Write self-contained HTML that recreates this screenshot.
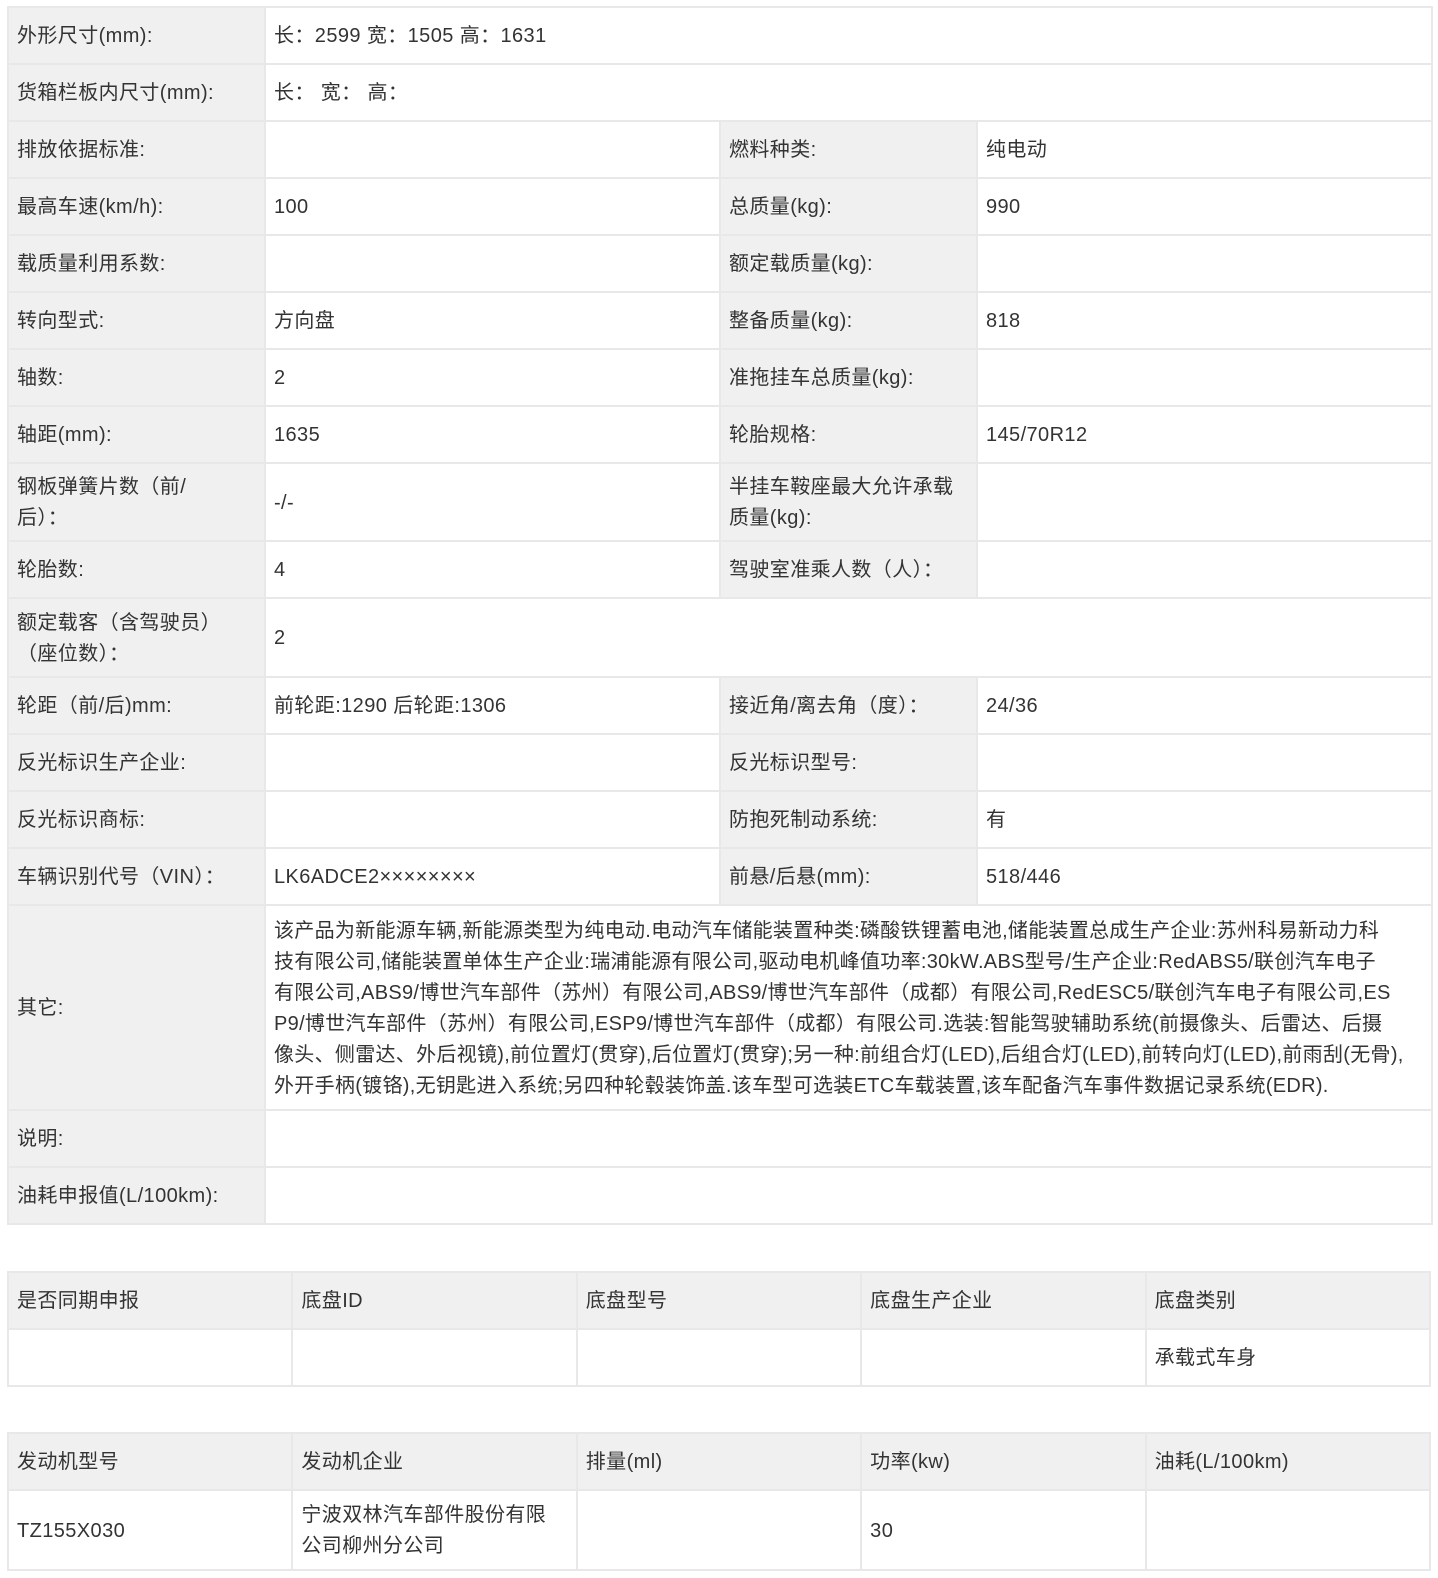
<!DOCTYPE html>
<html><head><meta charset="utf-8"><style>
body{margin:0;background:#fff;font-family:"Liberation Sans","Noto Sans CJK SC",sans-serif;font-size:20px;color:#333;}
table{position:absolute;left:7px;width:1424px;border-collapse:collapse;table-layout:fixed;}
td{border:2px solid #e8e8e8;padding:2px 8px 0 8px;line-height:31px;vertical-align:middle;letter-spacing:0.4px;}
td.l{background:#f0f0f0;}
tr.h td{background:#f0f0f0;}
</style></head><body>
<table style="top:6px">
<colgroup><col style="width:257px"><col style="width:455px"><col style="width:257px"><col style="width:455px"></colgroup>
<tr style="height:57px"><td class="l">外形尺寸(mm):</td><td colspan="3">长：2599 宽：1505 高：1631</td></tr>
<tr style="height:57px"><td class="l">货箱栏板内尺寸(mm):</td><td colspan="3">长： 宽： 高：</td></tr>
<tr style="height:57px"><td class="l">排放依据标准:</td><td></td><td class="l">燃料种类:</td><td>纯电动</td></tr>
<tr style="height:57px"><td class="l">最高车速(km/h):</td><td>100</td><td class="l">总质量(kg):</td><td>990</td></tr>
<tr style="height:57px"><td class="l">载质量利用系数:</td><td></td><td class="l">额定载质量(kg):</td><td></td></tr>
<tr style="height:57px"><td class="l">转向型式:</td><td>方向盘</td><td class="l">整备质量(kg):</td><td>818</td></tr>
<tr style="height:57px"><td class="l">轴数:</td><td>2</td><td class="l">准拖挂车总质量(kg):</td><td></td></tr>
<tr style="height:57px"><td class="l">轴距(mm):</td><td>1635</td><td class="l">轮胎规格:</td><td>145/70R12</td></tr>
<tr style="height:78px"><td class="l">钢板弹簧片数（前/<br>后）：</td><td>-/-</td><td class="l">半挂车鞍座最大允许承载<br>质量(kg):</td><td></td></tr>
<tr style="height:57px"><td class="l">轮胎数:</td><td>4</td><td class="l">驾驶室准乘人数（人）：</td><td></td></tr>
<tr style="height:79px"><td class="l">额定载客（含驾驶员）<br>（座位数）：</td><td colspan="3">2</td></tr>
<tr style="height:57px"><td class="l">轮距（前/后)mm:</td><td>前轮距:1290 后轮距:1306</td><td class="l">接近角/离去角（度）：</td><td>24/36</td></tr>
<tr style="height:57px"><td class="l">反光标识生产企业:</td><td></td><td class="l">反光标识型号:</td><td></td></tr>
<tr style="height:57px"><td class="l">反光标识商标:</td><td></td><td class="l">防抱死制动系统:</td><td>有</td></tr>
<tr style="height:57px"><td class="l">车辆识别代号（VIN）：</td><td>LK6ADCE2××××××××</td><td class="l">前悬/后悬(mm):</td><td>518/446</td></tr>
<tr style="height:205px"><td class="l">其它:</td><td colspan="3" style="white-space:nowrap;letter-spacing:0.3px;overflow:hidden">该产品为新能源车辆,新能源类型为纯电动.电动汽车储能装置种类:磷酸铁锂蓄电池,储能装置总成生产企业:苏州科易新动力科<br>技有限公司,储能装置单体生产企业:瑞浦能源有限公司,驱动电机峰值功率:30kW.ABS型号/生产企业:RedABS5/联创汽车电子<br>有限公司,ABS9/博世汽车部件（苏州）有限公司,ABS9/博世汽车部件（成都）有限公司,RedESC5/联创汽车电子有限公司,ES<br>P9/博世汽车部件（苏州）有限公司,ESP9/博世汽车部件（成都）有限公司.选装:智能驾驶辅助系统(前摄像头、后雷达、后摄<br>像头、侧雷达、外后视镜),前位置灯(贯穿),后位置灯(贯穿);另一种:前组合灯(LED),后组合灯(LED),前转向灯(LED),前雨刮(无骨),<br>外开手柄(镀铬),无钥匙进入系统;另四种轮毂装饰盖.该车型可选装ETC车载装置,该车配备汽车事件数据记录系统(EDR).</td></tr>
<tr style="height:57px"><td class="l">说明:</td><td colspan="3"></td></tr>
<tr style="height:57px"><td class="l">油耗申报值(L/100km):</td><td colspan="3"></td></tr>
</table>
<table style="top:1271px">
<tr class="h" style="height:57px"><td>是否同期申报</td><td>底盘ID</td><td>底盘型号</td><td>底盘生产企业</td><td>底盘类别</td></tr>
<tr style="height:57px"><td></td><td></td><td></td><td></td><td>承载式车身</td></tr>
</table>
<table style="top:1432px">
<tr class="h" style="height:57px"><td>发动机型号</td><td>发动机企业</td><td>排量(ml)</td><td>功率(kw)</td><td>油耗(L/100km)</td></tr>
<tr style="height:80px"><td>TZ155X030</td><td>宁波双林汽车部件股份有限<br>公司柳州分公司</td><td></td><td>30</td><td></td></tr>
</table>
</body></html>
